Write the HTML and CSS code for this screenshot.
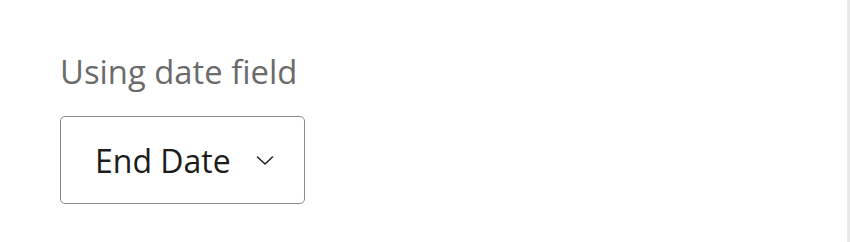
FILE: index.html
```html
<!DOCTYPE html>
<html lang="en">
<head>
  <meta charset="UTF-8">
  <meta name="viewport" content="width=device-width, initial-scale=1.0">
  <title>Date field</title>
  <link rel="stylesheet" href="styles.css">
</head>
<body>
  <div class="panel">
    <!-- Field label -->
    <div class="field-label">Using date field</div>

    <!-- Dropdown -->
    <button class="dropdown">
      <span class="dropdown-value">End Date</span>
      <svg class="chevron" width="18" height="11" viewBox="0 0 18 11">
        <path d="M1.5 2 L9 9 L16.5 2" fill="none" stroke="#222" stroke-width="1.6" stroke-linecap="round" stroke-linejoin="round"/>
      </svg>
    </button>
  </div>
</body>
</html>
```

FILE: styles.css
```css
/* General Reset */
* {
  margin: 0;
  padding: 0;
  box-sizing: border-box;
  font-family: 'Open Sans', sans-serif;
}

body {
  width: 850px;
  height: 242px;
  background: #fff;
  display: flex;
}

/* Panel */
.panel {
  flex: 1;
  padding: 52px 0 0 60px;
  border-right: 3px solid #e8e8e8;
  display: flex;
  flex-direction: column;
  align-items: flex-start;
}

.field-label {
  font-size: 32.8px;
  line-height: 40px;
  color: #6b6b6b;
  margin-bottom: 24px;
}

/* Dropdown */
.dropdown {
  display: flex;
  align-items: center;
  gap: 25px;
  height: 88px;
  padding: 0 30px 0 34px;
  background: #fff;
  border: 1px solid #8a8a8a;
  border-radius: 5px;
  cursor: pointer;
}

.dropdown-value {
  font-size: 32px;
  color: #1c1c1c;
}

.chevron {
  display: block;
}
```
